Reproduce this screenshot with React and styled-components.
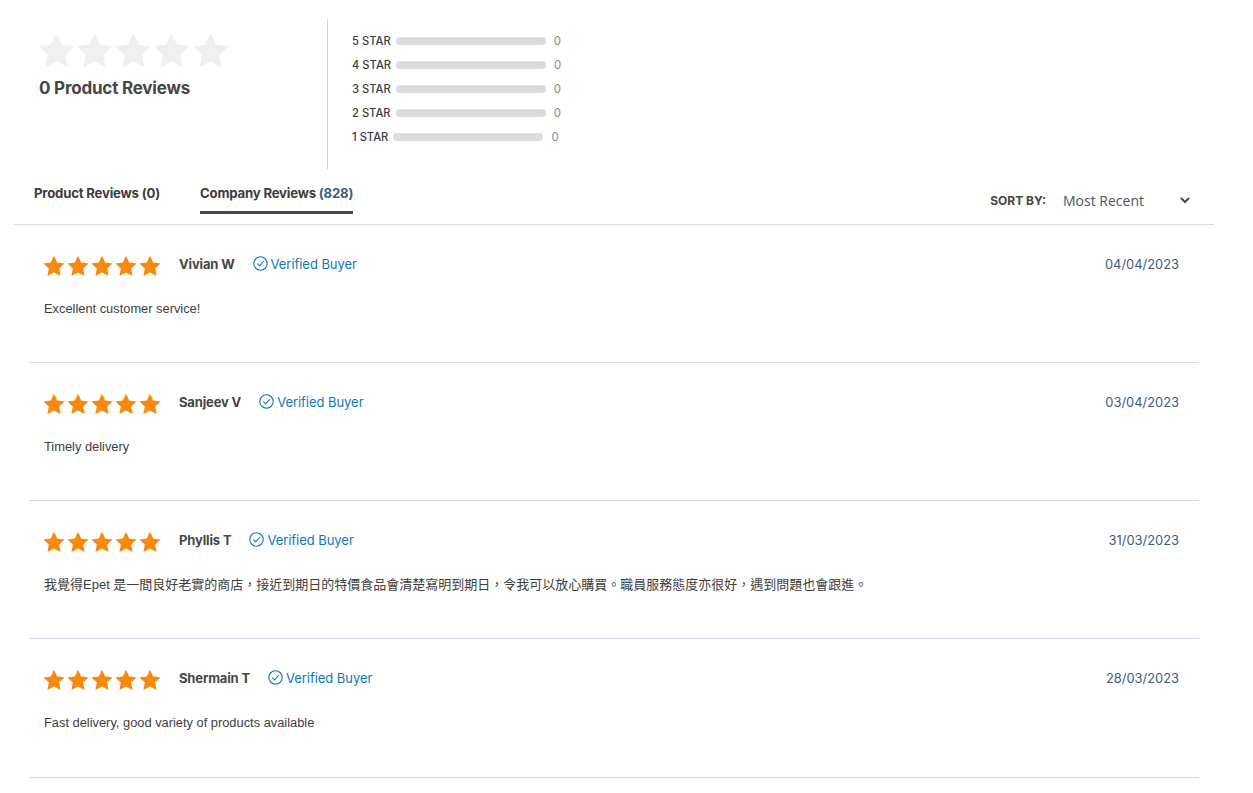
import React from 'react';
import styled, { createGlobalStyle } from 'styled-components';

const GlobalStyle = createGlobalStyle`
  html, body {
    margin: 0;
    padding: 0;
    background: #fff;
  }
  body {
    font-family: "Inter", "Liberation Sans", sans-serif;
    overflow: hidden;
  }
`;

const Page = styled.div`
  width: 1253px;
  height: 793px;
  overflow: hidden;
  box-sizing: border-box;
  padding: 19px 39px 0 14px;
`;

const Summary = styled.section`
  display: flex;
  height: 150px;
`;

const SummaryLeft = styled.div`
  flex: none;
  width: 314px;
  box-sizing: border-box;
  padding: 13px 0 0 24px;
  border-right: 1px solid #d4d4d4;
`;

const StarRow = styled.div`
  display: flex;
  gap: ${({ $gap }) => $gap}px;
`;

const SummaryTitle = styled.h2`
  margin: 8px 0 0 1px;
  font-size: 17px;
  line-height: 23px;
  font-weight: 700;
  letter-spacing: -0.2px;
  color: #464646;
`;

const Histogram = styled.div`
  padding: 10px 0 0 24px;
  display: flex;
  flex-direction: column;
`;

const HistogramRow = styled.div`
  height: 24px;
  display: flex;
  align-items: center;
`;

const HistogramLabel = styled.span`
  font-size: 11.2px;
  font-weight: 500;
  color: #3d3d3d;
  margin-right: 5px;
  white-space: nowrap;
`;

const HistogramBar = styled.div`
  width: 150px;
  height: 8px;
  border-radius: 4px;
  background: #dcdcdc;
`;

const HistogramCount = styled.span`
  font-size: 11.5px;
  color: #8a8a8a;
  margin-left: 8px;
`;

const TabBar = styled.div`
  display: flex;
  justify-content: space-between;
  height: 56px;
  box-sizing: border-box;
  border-bottom: 1px solid #d5dbe5;
`;

const Tabs = styled.div`
  display: flex;
  gap: 40px;
  padding-left: 20px;
`;

const Tab = styled.div`
  height: 45px;
  box-sizing: border-box;
  padding-top: 14px;
  font-size: 13.2px;
  line-height: 20px;
  font-weight: 700;
  letter-spacing: -0.2px;
  color: #3d3d3d;
  border-bottom: 3px solid ${({ $active }) => ($active ? '#464646' : 'transparent')};

  span {
    color: ${({ $active }) => ($active ? '#3d5a80' : '#3d3d3d')};
  }
`;

const Sort = styled.div`
  display: flex;
  align-items: center;
  padding: 8px 24px 0 0;
  box-sizing: border-box;
  height: 55px;
`;

const SortLabel = styled.span`
  font-size: 12px;
  font-weight: 700;
  color: #464646;
  margin-right: 17px;
`;

const SortValue = styled.span`
  font-family: "Open Sans", sans-serif;
  font-size: 14px;
  color: #4b5563;
  width: 117px;
`;

const ReviewList = styled.div`
  margin: 0 15px;
`;

const Review = styled.article`
  height: 138px;
  box-sizing: border-box;
  padding: 27px 20px 0 15px;
  border-bottom: 1px solid #d5dbe5;

  &:last-child {
    height: 139px;
  }
`;

const ReviewHead = styled.div`
  display: flex;
  align-items: center;
  height: 26px;
`;

const StarsWrap = styled.div`
  margin-left: -1px;
  margin-top: 1px;
`;

const Reviewer = styled.span`
  font-size: 13px;
  font-weight: 700;
  letter-spacing: -0.15px;
  color: #464646;
  margin-left: 18px;
  margin-top: -3px;
`;

const Verified = styled.span`
  display: flex;
  align-items: center;
  gap: 3px;
  margin-left: 18px;
  margin-top: -3px;
  font-size: 13px;
  letter-spacing: -0.05px;
  color: #0f78b8;
`;

const ReviewDate = styled.time`
  margin-left: auto;
  margin-top: -1px;
  font-size: 12.9px;
  color: #3d5a80;
`;

const ReviewText = styled.p`
  margin: 22px 0 0;
  font-family: "Liberation Sans", "Noto Sans CJK TC", sans-serif;
  font-size: ${({ lang }) => (lang ? '13px' : '12.85px')};
  line-height: 18px;
  color: #3d3d3d;
`;

const StarIcon = ({ size, color }) => (
  <svg width={size} height={size} viewBox="0 0 24 24" fill={color} aria-hidden="true">
    <path d="M12 .8l3.5 7.3 8 1.1-5.8 5.6 1.4 8-7.1-3.8-7.1 3.8 1.4-8L.5 9.2l8-1.1z" />
  </svg>
);

const CheckCircle = () => (
  <svg width="15" height="15" viewBox="0 0 15 15" fill="none" stroke="#0f78b8" strokeWidth="1.1" aria-hidden="true">
    <circle cx="7.5" cy="7.5" r="6.7" />
    <path d="M4.6 7.8l2 2 3.9-4.3" strokeLinecap="round" strokeLinejoin="round" />
  </svg>
);

const Chevron = () => (
  <svg width="10" height="7" viewBox="0 0 10 7" fill="none" stroke="#464646" strokeWidth="2" aria-hidden="true">
    <path d="M1 1l4 4 4-4" />
  </svg>
);

const histogram = ['5 STAR', '4 STAR', '3 STAR', '2 STAR', '1 STAR'];

const reviews = [
  { name: 'Vivian W', date: '04/04/2023', text: 'Excellent customer service!' },
  { name: 'Sanjeev V', date: '03/04/2023', text: 'Timely delivery' },
  {
    name: 'Phyllis T',
    date: '31/03/2023',
    lang: 'zh-TW',
    text: '我覺得Epet 是一間良好老實的商店，接近到期日的特價食品會清楚寫明到期日，令我可以放心購買。職員服務態度亦很好，遇到問題也會跟進。',
  },
  { name: 'Shermain T', date: '28/03/2023', text: 'Fast delivery, good variety of products available' },
];

const Stars = ({ size, gap, color }) => (
  <StarRow $gap={gap}>
    {[0, 1, 2, 3, 4].map((i) => (
      <StarIcon key={i} size={size} color={color} />
    ))}
  </StarRow>
);

export default function App() {
  return (
    <Page>
      <GlobalStyle />
      <Summary>
        <SummaryLeft>
          <Stars size={37} gap={1.4} color="#efefef" />
          <SummaryTitle>0 Product Reviews</SummaryTitle>
        </SummaryLeft>
        <Histogram>
          {histogram.map((label) => (
            <HistogramRow key={label}>
              <HistogramLabel>{label}</HistogramLabel>
              <HistogramBar />
              <HistogramCount>0</HistogramCount>
            </HistogramRow>
          ))}
        </Histogram>
      </Summary>
      <TabBar>
        <Tabs>
          <Tab>
            Product Reviews <span>(0)</span>
          </Tab>
          <Tab $active>
            Company Reviews <span>(828)</span>
          </Tab>
        </Tabs>
        <Sort>
          <SortLabel>SORT BY:</SortLabel>
          <SortValue>Most Recent</SortValue>
          <Chevron />
        </Sort>
      </TabBar>
      <ReviewList>
        {reviews.map((r) => (
          <Review key={r.name}>
            <ReviewHead>
              <StarsWrap>
                <Stars size={22} gap={2} color="#f7890f" />
              </StarsWrap>
              <Reviewer>{r.name}</Reviewer>
              <Verified>
                <CheckCircle />
                Verified Buyer
              </Verified>
              <ReviewDate>{r.date}</ReviewDate>
            </ReviewHead>
            <ReviewText lang={r.lang}>{r.text}</ReviewText>
          </Review>
        ))}
      </ReviewList>
    </Page>
  );
}
